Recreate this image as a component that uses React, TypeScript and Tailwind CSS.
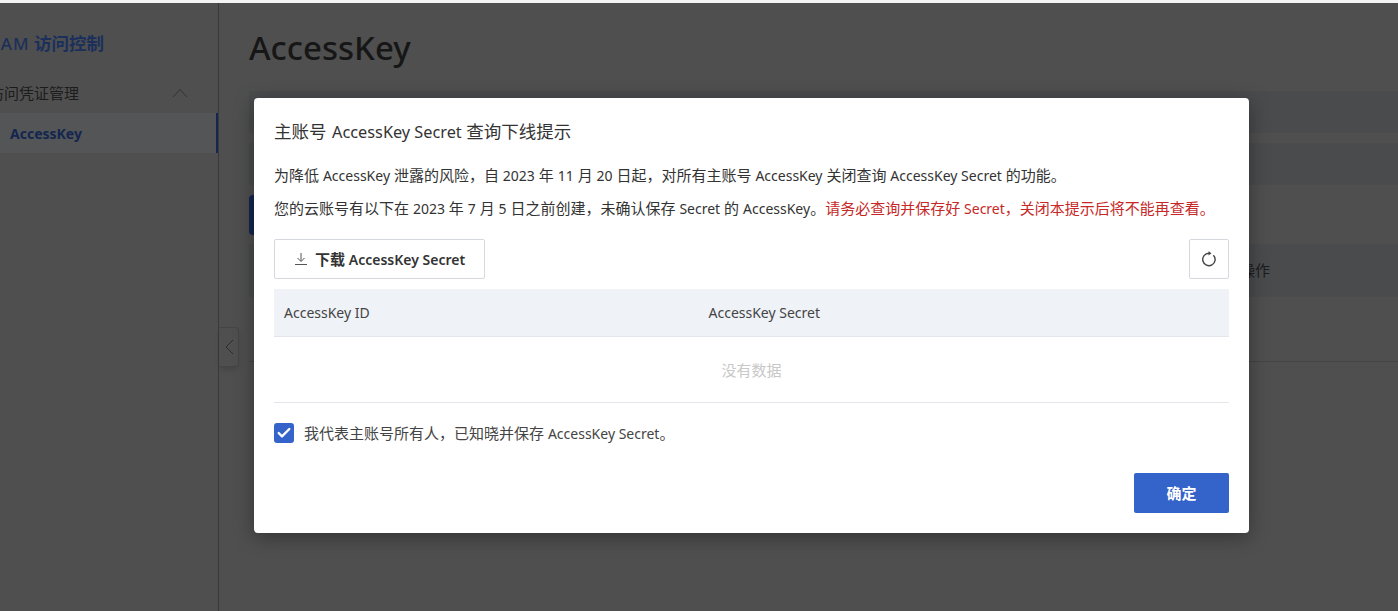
import { Check } from 'lucide-react';

const font = 'font-["Noto_Sans","Noto_Sans_CJK_SC",sans-serif]';

// latin runs sit a size below the CJK around them, same as the original page
function Mixed({ text }: { text: string }) {
  const parts = text.split(/([A-Za-z0-9](?:[A-Za-z0-9 ]*[A-Za-z0-9])?)/);
  return (
    <>
      {parts.map((part, i) =>
        i % 2 === 1 ? (
          <span key={i} className="text-[14px]">
            {part}
          </span>
        ) : (
          part
        ),
      )}
    </>
  );
}

export default function App() {
  return (
    <div className={`relative h-[611px] w-full overflow-hidden bg-white ${font}`}>
      {/* Page behind the mask */}
      <div className="flex h-full">
        <aside className="flex w-[219px] shrink-0 flex-col border-r border-[#3a3a3a] bg-[#4f4f4f] pt-[28px]">
          <div className="-ml-[11px] h-[30px] text-[17.500px] leading-[30px] font-bold text-[#1b2f5c]">
            <span className="text-[17px] font-medium tracking-[1px]">RAM</span> 访问控制
          </div>
          <div className="mt-[15px] flex h-[40px] items-center justify-between pr-[30px] text-[15px] text-[#1c1c1c]">
            <span className="-ml-[11px]">访问凭证管理</span>
            <svg viewBox="0 0 16 10" className="h-[10px] w-4 text-[#333333]" fill="none" stroke="currentColor">
              <path d="M1 9 8 1.500 15 9" />
            </svg>
          </div>
          <div className="flex h-[40px] items-center border-r-2 border-[#14264f] bg-[#535557] pt-[2px] pl-[10px] text-sm font-bold text-[#14264f]">
            AccessKey
          </div>
        </aside>
        <main className="min-w-0 flex-1 bg-[#4f4f4f] pt-[24px] pl-[30px]">
          <h1 className="text-[33px] leading-[48px] font-medium text-[#161616]">AccessKey</h1>
          <div className="mt-[19px] h-[42px] bg-[#4a4b4d]" />
          <div className="mt-[10px] h-[42px] bg-[#4a4b4d]" />
          <div className="mt-[10px] h-[40px] w-[60px] rounded-sm bg-[#14264f]" />
          <div className="mt-[9px] flex h-[53px] items-center justify-end bg-[#4a4b4d] pr-[128px] text-[15px] text-[#1c1c1c]">操作</div>
          <div className="h-[65px] border-b border-[#444444]" />
        </main>
      </div>

      <button className="absolute top-[327px] left-[219px] flex h-[40px] w-[20px] items-center justify-center rounded-r-sm border border-l-0 border-[#454545] bg-[#4f4f4f] shadow-md">
        <svg viewBox="0 0 10 16" className="h-4 w-[10px] text-[#2c2c2c]" fill="none" stroke="currentColor">
          <path d="M9 1 2 8 9 15" />
        </svg>
      </button>

      <div className="absolute inset-x-0 top-0 h-[3px] bg-[#f4f4f4]" />

      {/* Dialog */}
      <div className="absolute top-[98px] left-[254px] flex h-[435px] w-[995px] flex-col rounded-[4px] bg-white px-[20px] pt-[21px] shadow-[0_4px_20px_rgba(0,0,0,0.35)]">
        <h2 className="h-6 text-[17.500px] leading-6 text-[#333333]">
          主账号 <span className="ml-px text-[16.300px]">AccessKey Secret</span> 查询下线提示
        </h2>
        <p className="mt-[20px] h-6 text-[15px] leading-[24px] text-[#333333]">
          <Mixed text="为降低 AccessKey 泄露的风险，自 2023 年 11 月 20 日起，对所有主账号 AccessKey 关闭查询 AccessKey Secret 的功能。" />
        </p>
        <p className="mt-[9px] h-6 text-[15px] leading-[24px] text-[#333333]">
          <Mixed text="您的云账号有以下在 2023 年 7 月 5 日之前创建，未确认保存 Secret 的 AccessKey。" />
          <span className="text-[#c62828]">
            <Mixed text="请务必查询并保存好 Secret，关闭本提示后将不能再查看。" />
          </span>
        </p>

        <div className="mt-[19px] flex items-center justify-between">
          <button className="flex h-[40px] w-[211px] items-center justify-center gap-[8px] rounded-[2px] border border-[#d5d9de] pl-px text-[15px] font-semibold text-[#333333]">
            <svg viewBox="0 0 12 12" className="h-3 w-3 text-[#555555]" fill="none" stroke="currentColor">
              <path d="M6 0v8M2.500 5 6 8.500 9.500 5M0 11.500h12" />
            </svg>
            <span>
              <span className="font-bold">下载</span> <span className="text-[14px]">AccessKey Secret</span>
            </span>
          </button>
          <button className="flex h-[40px] w-[40px] items-center justify-center rounded-[2px] border border-[#d5d9de]">
            <svg viewBox="0 0 16 16" className="h-4 w-4 text-[#444444]" fill="none" stroke="currentColor" strokeWidth="1.4">
              <path d="M12.400 4.200A6.200 6.200 0 1 1 8 2.300" />
              <path d="M7.500 0.300 10.500 2.300 7.500 4.500Z" fill="currentColor" stroke="none" />
            </svg>
          </button>
        </div>

        <div className="mt-[10px] flex h-[48px] items-center border-b border-[#e3e6eb] bg-[#eff2f7] text-sm text-[#444444]">
          <div className="w-[434.500px] pl-[10px]">AccessKey ID</div>
          <div>AccessKey Secret</div>
        </div>
        <div className="flex h-[66px] items-center justify-center border-b border-[#e3e6eb] pt-[2px] text-[15px] text-[#c8c8c8]">没有数据</div>

        <label className="mt-[20px] flex h-5 items-center gap-[10px] text-[15px] leading-5 text-[#444444]">
          <span className="flex h-5 w-5 items-center justify-center rounded-[3px] bg-[#3463c9]">
            <Check className="h-4 w-4 text-white" strokeWidth={3.5} />
          </span>
          <span>
            <Mixed text="我代表主账号所有人，已知晓并保存 AccessKey Secret。" />
          </span>
        </label>

        <div className="mt-[30px] flex justify-end">
          <button className="h-[40px] w-[95px] rounded-[2px] bg-[#3463c9] text-[15px] font-bold text-white">确定</button>
        </div>
      </div>
    </div>
  );
}
